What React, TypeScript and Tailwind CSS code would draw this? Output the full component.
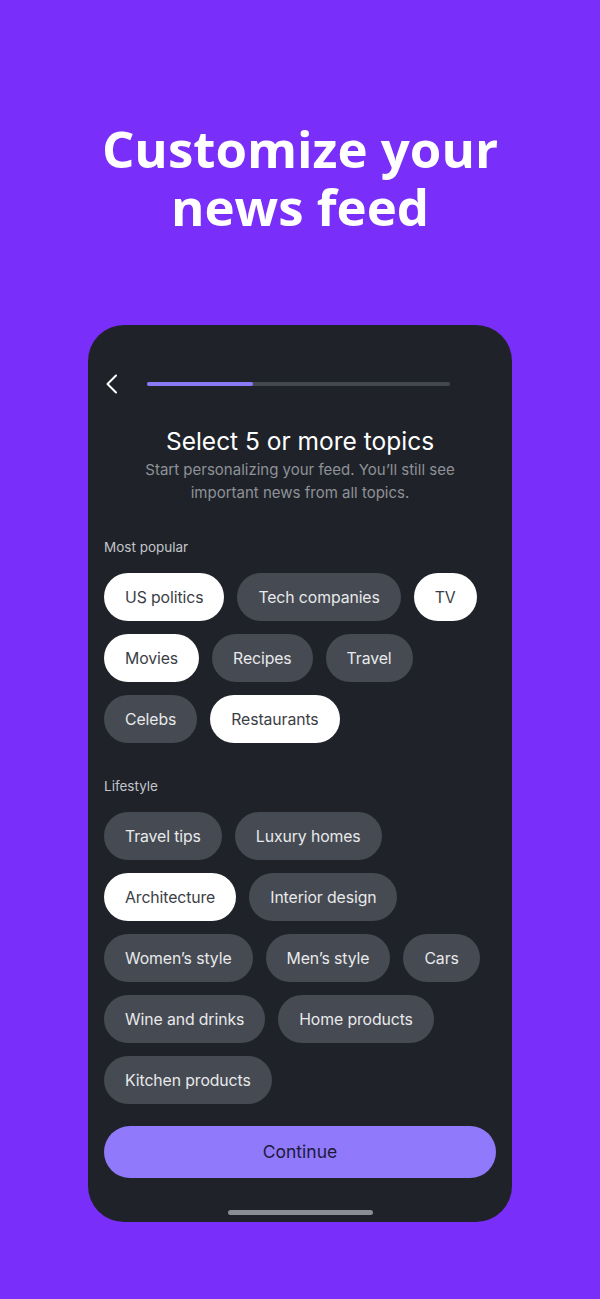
const popular: [string, boolean][] = [
  ['US politics', true],
  ['Tech companies', false],
  ['TV', true],
  ['Movies', true],
  ['Recipes', false],
  ['Travel', false],
  ['Celebs', false],
  ['Restaurants', true],
];

const lifestyle: [string, boolean][] = [
  ['Travel tips', false],
  ['Luxury homes', false],
  ['Architecture', true],
  ['Interior design', false],
  ['Women’s style', false],
  ['Men’s style', false],
  ['Cars', false],
  ['Wine and drinks', false],
  ['Home products', false],
  ['Kitchen products', false],
];

function Chip({ label, selected }: { label: string; selected: boolean }) {
  return (
    <div
      className={
        selected
          ? 'h-[48px] px-[21px] pt-[1px] rounded-full flex items-center bg-white text-[#3b3e45] text-[15.8px] tracking-[-0.1px]'
          : 'h-[48px] px-[21px] pt-[1px] rounded-full flex items-center bg-[#464a52] text-[#e8e9eb] text-[15.8px] tracking-[-0.1px]'
      }
    >
      {label}
    </div>
  );
}

function ChipGroup({ title, items }: { title: string; items: [string, boolean][] }) {
  return (
    <div>
      <div className="text-[13.5px] leading-[20px] text-[#c3c5c9]">{title}</div>
      <div className="mt-[16px] flex flex-wrap gap-x-[13px] gap-y-[13px]">
        {items.map(([label, sel]) => (
          <Chip key={label} label={label} selected={sel} />
        ))}
      </div>
    </div>
  );
}

export default function App() {
  return (
    <div
      className="min-h-[1299px] w-full bg-[#7a2ef9] flex flex-col items-center pt-[119px]"
      style={{ fontFamily: 'Inter, "Noto Sans", sans-serif' }}
    >
      <h1
        className="text-white text-center font-bold text-[51px] leading-[58px]"
        style={{ fontFamily: '"Open Sans", "Noto Sans", sans-serif' }}
      >
        <div>Customize your</div>
        <div>news feed</div>
      </h1>

      <div className="mt-[90px] w-[424px] h-[897px] rounded-[36px] bg-[#1f2329] px-[16px] flex flex-col">
        <div className="mt-[47px] h-[24px] flex items-center">
          <svg width="14" height="20" viewBox="0 0 14 20" fill="none">
            <polyline
              points="12,1.5 3.5,10 12,18.5"
              stroke="white"
              strokeWidth="2"
              strokeLinecap="round"
              strokeLinejoin="round"
            />
          </svg>
          <div className="ml-[29px] w-[303px] h-[4px] rounded-full bg-[#44484f] flex">
            <div className="w-[106px] h-full rounded-full bg-[#8c79f6]" />
          </div>
        </div>

        <div className="mt-[29px] text-center text-white text-[24.5px] leading-[32px]">
          Select 5 or more topics
        </div>
        <div className="mt-[1px] text-center text-[#8e9197] text-[15px] leading-[23px] px-[30px]">
          Start personalizing your feed. You’ll still see important news from all topics.
        </div>

        <div className="mt-[33px]">
          <ChipGroup title="Most popular" items={popular} />
        </div>
        <div className="mt-[33px]">
          <ChipGroup title="Lifestyle" items={lifestyle} />
        </div>

        <button className="mt-[22px] h-[52px] w-full rounded-full bg-[#9079fb] text-[#1d1a3a] text-[17.5px]">
          Continue
        </button>

        <div className="mt-[32px] self-center w-[145px] h-[5px] rounded-full bg-[#8a8d92]" />
      </div>
    </div>
  );
}
